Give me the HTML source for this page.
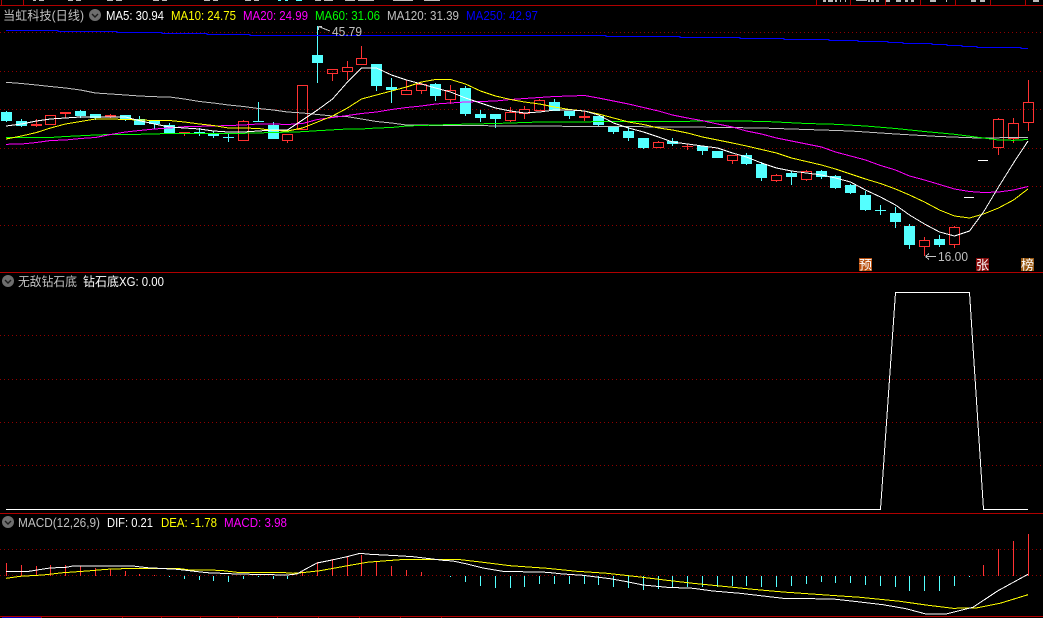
<!DOCTYPE html>
<html lang="zh">
<head>
<meta charset="utf-8">
<title>当虹科技</title>
<style>
html,body{margin:0;padding:0;background:#000;width:1043px;height:618px;overflow:hidden}
svg{display:block}
text{font-family:"Liberation Sans","WenQuanYi Zen Hei","Noto Sans CJK SC",sans-serif;font-size:12.5px}
.l{fill:none;stroke-width:1;shape-rendering:crispEdges}
.b{font-size:13px;fill:#fff;text-anchor:middle}
</style>
</head>
<body>
<svg width="1043" height="618" viewBox="0 0 1043 618" xmlns="http://www.w3.org/2000/svg">
<defs>
<pattern id="dots" x="0" y="0" width="4" height="1" patternUnits="userSpaceOnUse"><rect x="0" y="0" width="1" height="1" fill="#900000"/></pattern>
</defs>
<rect width="1043" height="618" fill="#000"/>

<!-- top strip fragments -->
<g fill="#bdbdbd" shape-rendering="crispEdges">
<rect x="33" y="0" width="3" height="1"/><rect x="39" y="0" width="5" height="1"/><rect x="68" y="0" width="5" height="1"/><rect x="76" y="0" width="5" height="1"/><rect x="107" y="0" width="6" height="1"/><rect x="116" y="0" width="6" height="1"/><rect x="153" y="0" width="6" height="1"/><rect x="162" y="0" width="5" height="1"/><rect x="204" y="0" width="6" height="1"/><rect x="213" y="0" width="5" height="1"/><rect x="245" y="0" width="6" height="1"/><rect x="254" y="0" width="5" height="1"/><rect x="315" y="0" width="6" height="1"/><rect x="324" y="0" width="9" height="1"/><rect x="345" y="0" width="10" height="1"/><rect x="358" y="0" width="16" height="1"/><rect x="393" y="0" width="20" height="1"/><rect x="424" y="0" width="16" height="1"/>
<rect x="823" y="0" width="3" height="2"/><rect x="828" y="0" width="5" height="2"/><rect x="835" y="0" width="2" height="2"/><rect x="840" y="0" width="1" height="2"/><rect x="845" y="0" width="1" height="2"/><rect x="856" y="0" width="11" height="1"/><rect x="868" y="0" width="2" height="2"/><rect x="871" y="0" width="3" height="2"/><rect x="876" y="0" width="3" height="2"/><rect x="886" y="0" width="4" height="2"/><rect x="896" y="0" width="5" height="2"/><rect x="905" y="0" width="3" height="2"/><rect x="911" y="0" width="3" height="2"/><rect x="930" y="0" width="6" height="2"/><rect x="946" y="0" width="1" height="2"/><rect x="971" y="0" width="5" height="2"/><rect x="980" y="0" width="5" height="2"/><rect x="1033" y="0" width="6" height="2"/>
<rect x="278" y="0" width="3" height="1" fill="#54ffff"/><rect x="285" y="0" width="3" height="1" fill="#54ffff"/><rect x="296" y="0" width="6" height="1" fill="#54ffff"/>
</g>

<!-- frame lines -->
<g fill="#b00000" shape-rendering="crispEdges">
<rect x="0" y="5" width="1043" height="1"/>
<rect x="0" y="272" width="1043" height="1"/>
<rect x="0" y="513" width="1043" height="1"/>
<rect x="0" y="616" width="1043" height="1"/>
<rect x="1" y="0" width="1" height="5"/><rect x="23" y="0" width="1" height="5"/>
<rect x="816" y="0" width="1" height="5"/><rect x="850" y="0" width="1" height="5"/><rect x="885" y="0" width="1" height="5"/><rect x="920" y="0" width="1" height="5"/><rect x="955" y="0" width="1" height="5"/><rect x="990" y="0" width="1" height="5"/><rect x="1025" y="0" width="1" height="5"/>
<rect x="41" y="616" width="1" height="2"/><rect x="122" y="616" width="1" height="2"/><rect x="161" y="616" width="1" height="2"/><rect x="200" y="616" width="1" height="2"/><rect x="238" y="616" width="1" height="2"/><rect x="277" y="616" width="1" height="2"/><rect x="318" y="616" width="1" height="2"/><rect x="359" y="616" width="1" height="2"/><rect x="400" y="616" width="1" height="2"/><rect x="441" y="616" width="1" height="2"/>
<rect x="2" y="617" width="39" height="1" fill="#0000c0"/>
</g>

<!-- dotted grid -->
<g fill="url(#dots)" shape-rendering="crispEdges">
<rect x="0" y="32" width="1043" height="1"/><rect x="0" y="71" width="1043" height="1"/><rect x="0" y="109" width="1043" height="1"/><rect x="0" y="148" width="1043" height="1"/><rect x="0" y="186" width="1043" height="1"/><rect x="0" y="225" width="1043" height="1"/><rect x="0" y="335" width="1043" height="1"/><rect x="0" y="379" width="1043" height="1"/><rect x="0" y="422" width="1043" height="1"/><rect x="0" y="465" width="1043" height="1"/><rect x="0" y="549" width="1043" height="1"/><rect x="0" y="575" width="1043" height="1"/>
</g>

<!-- cyan candles -->
<path fill="#54ffff" shape-rendering="crispEdges" d="M1 112h11v9H1zM16 121h11v5H16zM75 111h11v5H75zM90 114h11v4H90zM120 115h11v4H120zM134 119h11v6H134zM149 121h11v3H149zM164 125h11v8H164zM194 132h11v2H194zM208 133h11v3H208zM223 137h11v1H223zM253 121h11v1H253zM268 125h11v14H268zM312 55h11v8H312zM371 64h11v22H371zM386 87h11v3H386zM430 84h11v12H430zM460 88h11v26H460zM475 114h11v4H475zM490 114h11v5H490zM549 102h11v9H549zM564 111h11v5H564zM593 116h11v9H593zM608 126h11v6H608zM623 131h11v7H623zM638 138h11v10H638zM667 141h11v3H667zM697 146h11v5H697zM712 151h11v7H712zM741 155h11v9H741zM756 164h11v14H756zM786 173h11v4H786zM816 171h11v6H816zM830 176h11v12H830zM845 185h11v8H845zM860 195h11v15H860zM875 210h11v1H875zM890 213h11v9H890zM904 226h11v19H904zM934 239h11v6H934z"/>
<path class="l" stroke="#54ffff" d="M6.5 111V122M21.5 119V127M80.5 110V118M95.5 114V120M125.5 115V121M139.5 116V125M154.5 121V129M169.5 123V134M199.5 128V136M213.5 131V138M228.5 134V142M258.5 102V122M273.5 122V139M317.5 26V83M376.5 64V91M391.5 78V103M435.5 83V101M465.5 86V116M480.5 110V122M495.5 114V128M554.5 99V111M569.5 111V119M598.5 116V127M613.5 126V134M628.5 127V141M643.5 138V149M672.5 138V146M702.5 146V155M717.5 151V158M746.5 153V165M761.5 162V181M791.5 171V185M821.5 170V179M835.5 175V189M850.5 184V194M865.5 191V211M880.5 205V215M895.5 207V228M909.5 224V249M939.5 235V247"/>

<!-- red candles -->
<path class="l" stroke="#ff3232" d="M45.5 115.5H55.5V124.5H45.5ZM238.5 121.5H248.5V140.5H238.5ZM243.5 120V121M282.5 134.5H292.5V140.5H282.5ZM287.5 141V143M297.5 85.5H307.5V129.5H297.5ZM327.5 69.5H337.5V73.5H327.5ZM332.5 74V81M342.5 67.5H352.5V71.5H342.5ZM347.5 61V67M347.5 72V80M356.5 58.5H366.5V64.5H356.5ZM361.5 46V58M401.5 90.5H411.5V94.5H401.5ZM406.5 80V90M416.5 84.5H426.5V90.5H416.5ZM421.5 83V84M421.5 91V94M445.5 90.5H455.5V99.5H445.5ZM450.5 85V90M450.5 100V104M505.5 112.5H515.5V120.5H505.5ZM510.5 107V112M510.5 121V122M519.5 109.5H529.5V113.5H519.5ZM524.5 106V109M524.5 114V119M534.5 100.5H544.5V110.5H534.5ZM539.5 99V100M653.5 142.5H663.5V147.5H653.5ZM658.5 141V142M727.5 155.5H737.5V160.5H727.5ZM732.5 161V164M771.5 175.5H781.5V180.5H771.5ZM776.5 174V175M776.5 181V182M801.5 171.5H811.5V179.5H801.5ZM806.5 170V171M806.5 180V181M919.5 240.5H929.5V246.5H919.5ZM924.5 237V240M924.5 247V256M949.5 227.5H959.5V244.5H949.5ZM954.5 226V227M954.5 245V248M993.5 119.5H1003.5V147.5H993.5ZM998.5 118V119M998.5 148V155M1008.5 123.5H1018.5V138.5H1008.5ZM1013.5 118V123M1013.5 139V143M1023.5 102.5H1033.5V122.5H1023.5ZM1028.5 80V102M1028.5 123V131M36.5 119V127M65.5 114V118M110.5 114V118M184.5 133V136M584.5 111V121M687.5 144V150"/>
<path fill="#ff3232" shape-rendering="crispEdges" d="M31 124h11v2H31zM60 112h11v2H60zM105 115h11v2H105zM179 132h11v1H179zM579 116h11v2H579zM682 146h11v1H682z"/>
<path fill="#fff" shape-rendering="crispEdges" d="M964 197h10v1H964zM978 160h10v1H978z"/>

<!-- moving averages -->
<polyline class="l" stroke="#0000ff" points="6,30.5 58,30.5 58,31.5 117,31.5 117,32.5 162,32.5 162,33.5 207,33.5 207,34.5 250,34.5 250,35.5 606,35.5 606,36.5 680,36.5 680,37.5 740,37.5 740,38.5 784,38.5 784,39.5 829,39.5 829,40.5 858,40.5 858,41.5 888,41.5 888,42.5 903,42.5 903,43.5 932,43.5 932,44.5 947,44.5 947,45.5 962,45.5 962,46.5 977,46.5 977,47.5 1021,47.5 1021,48.5 1028,48.5"/>
<polyline class="l" stroke="#c0c0c0" points="6,82.3 21.5,83.5 36.5,85 50.5,86.5 65.5,88 80.5,90 95.5,93 110.5,94 125.5,95 139.5,96 154.5,96.7 169.5,97 184.5,99 199.5,101.5 213.5,103 228.5,105 243.5,106.5 258.5,108.5 273.5,110 287.5,112 302.5,113 317.5,114.5 332.5,116 347.5,116.7 361.5,119 376.5,121.5 391.5,123 406.5,125 450.5,125.5 598.5,126.5 687.5,127 761.5,128 791.5,129 821.5,130 850.5,131 895.5,134 939.5,136.5 969.5,137.7 983.5,138 1028,137.3"/>
<polyline class="l" stroke="#00ff00" points="6,137.7 50.5,137.5 65.5,136.5 95.5,135 110.5,134.5 125.5,134.3 139.5,134.3 169.5,133.5 213.5,133.3 243.5,133.3 273.5,132.5 302.5,131.7 317.5,130.7 347.5,129 361.5,129 376.5,128 391.5,127.5 406.5,126 450.5,124.5 495.5,123.5 539.5,122 584.5,122 598.5,121.5 687.5,121.3 702.5,121 761.5,121.3 776.5,122 806.5,123.5 835.5,124.3 865.5,126 895.5,128.5 924.5,131.5 954.5,134.3 983.5,138 998.5,140 1013.5,140.3 1028,139.5"/>
<polyline class="l" stroke="#ff00ff" points="6,144.3 21.5,144 36.5,142.5 50.5,140.5 65.5,140 80.5,138.5 95.5,137.5 110.5,134.5 125.5,132 139.5,130.5 154.5,129 169.5,128 184.5,126.7 199.5,126.3 213.5,126 228.5,125.5 243.5,125 258.5,124 273.5,124 287.5,124.5 302.5,123.5 317.5,119.5 332.5,117.5 347.5,115.5 361.5,113.5 376.5,112 391.5,109.5 406.5,107.5 421.5,106 435.5,104 450.5,103 465.5,102 480.5,101.5 495.5,101 510.5,99.5 524.5,98.5 539.5,97.5 554.5,96.5 569.5,96 584.5,95.5 598.5,98 613.5,101 628.5,104 643.5,107.5 658.5,111 672.5,115 687.5,118 702.5,120.7 717.5,124 732.5,127 746.5,131 761.5,134 776.5,138 791.5,141 806.5,144 821.5,147 835.5,152 850.5,156 865.5,160 880.5,165.5 895.5,170 909.5,176 924.5,180 939.5,184.5 954.5,189 969.5,191.5 983.5,192.5 998.5,192 1013.5,190 1028,186.5"/>
<polyline class="l" stroke="#ffff00" points="6,139 21.5,136 36.5,132.5 50.5,128 65.5,124 80.5,121.5 95.5,119 110.5,119 125.5,119.5 139.5,120 154.5,120.5 169.5,120.5 184.5,122 199.5,124 213.5,125.5 228.5,128 243.5,128 258.5,128.5 273.5,130.5 287.5,131 302.5,128 317.5,122 332.5,116 347.5,108 361.5,99 376.5,95 391.5,91 406.5,87 421.5,82 435.5,79.5 450.5,79.5 465.5,84 480.5,91 495.5,96 510.5,99.5 524.5,102 539.5,104 554.5,107 569.5,109.5 584.5,111 598.5,114 613.5,118 628.5,122 643.5,124.5 658.5,128 672.5,130 687.5,133 702.5,137 717.5,140 732.5,143 746.5,146 761.5,149.5 776.5,153 791.5,158 806.5,161.5 821.5,165 835.5,169 850.5,174 865.5,179 880.5,183.5 895.5,189 909.5,195 924.5,202 939.5,210 954.5,216 969.5,218 983.5,214 998.5,208 1013.5,200 1028,189"/>
<polyline class="l" stroke="#ffffff" points="6,126 21.5,124 36.5,121 50.5,119 65.5,118 80.5,117 95.5,117 110.5,117 125.5,117 139.5,120.7 154.5,124 169.5,127 184.5,128 199.5,129 213.5,131 228.5,132 243.5,132 258.5,131 273.5,130 287.5,130 302.5,120 317.5,110 332.5,99 347.5,82 361.5,68 376.5,68 391.5,75 406.5,80 421.5,84 435.5,88 450.5,92 465.5,98 480.5,103 495.5,108 510.5,111 524.5,113 539.5,112 554.5,110 569.5,110 584.5,111 598.5,115 613.5,123 628.5,128 643.5,132 658.5,137 672.5,142 687.5,144 702.5,146 717.5,148 732.5,153 746.5,157 761.5,163 776.5,168 791.5,171 806.5,173 821.5,175 835.5,178 850.5,182 865.5,190 880.5,197 895.5,205 909.5,215 924.5,224 939.5,232 954.5,236 969.5,231 983.5,212 998.5,187 1013.5,163 1028,141"/>

<!-- high / low markers -->
<path class="l" stroke="#c8c8c8" d="M318.5 26.5L330 31M318.5 26.5H322M318.5 26.5V30"/>
<text x="332" y="36" fill="#c0c0c0" textLength="30" lengthAdjust="spacingAndGlyphs">45.79</text>
<path class="l" stroke="#c8c8c8" d="M925.5 256.5H936M925.5 256.5L929 253.5M925.5 256.5L929 259.5"/>
<text x="938" y="261" fill="#c0c0c0" textLength="30" lengthAdjust="spacingAndGlyphs">16.00</text>

<!-- badges -->
<rect x="859" y="258" width="13" height="13" fill="#b8500f"/>
<text class="b" x="865.5" y="269.5">预</text>
<rect x="976" y="258" width="13" height="13" fill="#860a0a"/>
<text class="b" x="982.5" y="269.5">张</text>
<rect x="1021" y="258" width="13" height="13" fill="#96560f"/>
<text class="b" x="1027.5" y="269.5">榜</text>

<!-- title pane 1 -->
<text x="3" y="20" fill="#c0c0c0" textLength="81" lengthAdjust="spacingAndGlyphs">当虹科技(日线)</text>
<circle cx="95" cy="15" r="6" fill="#6e6e6e"/>
<path d="M92 14l3 3 3-3" fill="none" stroke="#1c1c1c" stroke-width="1.4"/>
<text x="106" y="20" fill="#ffffff" textLength="58" lengthAdjust="spacingAndGlyphs">MA5: 30.94</text>
<text x="171" y="20" fill="#ffff00" textLength="65" lengthAdjust="spacingAndGlyphs">MA10: 24.75</text>
<text x="243" y="20" fill="#ff00ff" textLength="65" lengthAdjust="spacingAndGlyphs">MA20: 24.99</text>
<text x="315" y="20" fill="#00ff00" textLength="65" lengthAdjust="spacingAndGlyphs">MA60: 31.06</text>
<text x="387" y="20" fill="#c0c0c0" textLength="72" lengthAdjust="spacingAndGlyphs">MA120: 31.39</text>
<text x="466" y="20" fill="#0000ff" textLength="72" lengthAdjust="spacingAndGlyphs">MA250: 42.97</text>

<!-- pane 2 -->
<circle cx="8" cy="281" r="6" fill="#6e6e6e"/>
<path d="M5 280l3 3 3-3" fill="none" stroke="#1c1c1c" stroke-width="1.4"/>
<text x="18" y="286" fill="#c0c0c0" textLength="59" lengthAdjust="spacingAndGlyphs">无敌钻石底</text>
<text x="83" y="286" fill="#ffffff" textLength="36" lengthAdjust="spacingAndGlyphs">钻石底</text>
<text x="119" y="286" fill="#ffffff" textLength="45" lengthAdjust="spacingAndGlyphs">XG: 0.00</text>
<polyline class="l" stroke="#ffffff" points="6,509.5 880.5,509.5 895.5,292.5 969.5,292.5 983.5,509.5 1028,509.5"/>

<!-- pane 3 -->
<circle cx="8" cy="522" r="6" fill="#6e6e6e"/>
<path d="M5 521l3 3 3-3" fill="none" stroke="#1c1c1c" stroke-width="1.4"/>
<text x="18" y="527" fill="#c0c0c0" textLength="82" lengthAdjust="spacingAndGlyphs">MACD(12,26,9)</text>
<text x="107" y="527" fill="#ffffff" textLength="46" lengthAdjust="spacingAndGlyphs">DIF: 0.21</text>
<text x="161" y="527" fill="#ffff00" textLength="56" lengthAdjust="spacingAndGlyphs">DEA: -1.78</text>
<text x="224" y="527" fill="#ff00ff" textLength="63" lengthAdjust="spacingAndGlyphs">MACD: 3.98</text>

<path class="l" stroke="#ff3232" d="M6.5 563V576M21.5 565V576M36.5 566V576M50.5 565V576M65.5 565V576M80.5 566V576M95.5 568V576M110.5 569V576M125.5 571V576M139.5 574V576M154.5 575V576M302.5 571V576M317.5 562V576M332.5 559V576M347.5 557V576M361.5 555V576M376.5 561V576M391.5 566V576M406.5 570V576M421.5 572V576M983.5 565V576M998.5 549V576M1013.5 541V576M1028.5 534V576"/>
<path class="l" stroke="#54ffff" d="M169.5 576V577M184.5 576V579M199.5 576V580M213.5 576V581M228.5 576V582M243.5 576V579M258.5 576V577M273.5 576V579M287.5 576V579M450.5 576V577M465.5 576V582M480.5 576V586M495.5 576V588M510.5 576V588M524.5 576V587M539.5 576V584M554.5 576V584M569.5 576V584M584.5 576V584M598.5 576V585M613.5 576V587M628.5 576V588M643.5 576V590M658.5 576V589M672.5 576V587M687.5 576V587M702.5 576V587M717.5 576V587M732.5 576V586M746.5 576V586M761.5 576V587M776.5 576V587M791.5 576V586M806.5 576V584M821.5 576V582M835.5 576V583M850.5 576V583M865.5 576V585M880.5 576V586M895.5 576V587M909.5 576V591M924.5 576V591M939.5 576V591M954.5 576V586M969.5 576V577"/>

<polyline class="l" stroke="#ffff00" points="6,578.3 20,576.3 43,575 63,572.7 87,571 107,569.3 133,568.3 177,568.3 190,570 220,570.3 237,572.3 280,572.3 293,573.3 302,572.7 320,570.7 350,565.3 367,562.3 383,561 400,559.7 457,559.3 483,562.3 510,565.7 547,568.3 577,571.3 607,573.3 640,577 667,580.3 693,583.3 727,586.7 753,589.3 783,592 826,595 860,597.3 900,601.3 926,605 953,608.3 976,608 1000,603.3 1028,594.7"/>
<polyline class="l" stroke="#ffffff" points="6,571.3 29,571.3 37,570 50,568 66,567.3 73,566 133,566 147,567.7 177,569.3 192,571 207,572.7 237,574 287,575 297,574 302,571 317,563 332,560 347,556.7 360,553.3 370,554.3 397,555.7 413,556.7 430,558.7 443,560.3 453,561 467,564 483,568 503,571.3 547,572.3 563,574 583,575.3 610,578.7 627,581.7 643,585 667,587.3 693,588.3 713,591 740,593.3 783,598.3 833,599 860,602 883,604.7 906,608.7 926,614 946,614 973,607.3 998,590.7 1028,574.3"/>
</svg>
</body>
</html>
